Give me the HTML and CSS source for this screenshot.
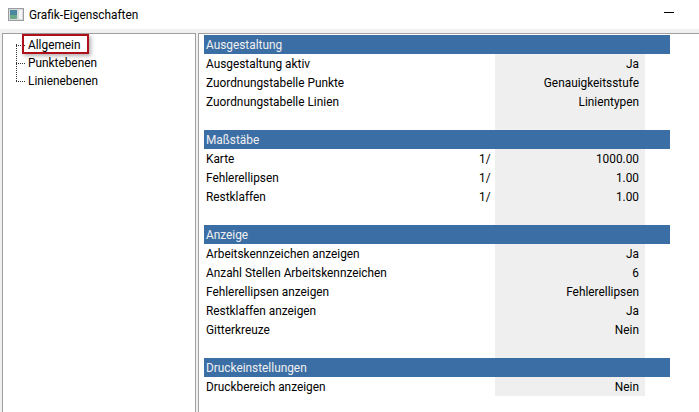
FILE: index.html
```html
<!DOCTYPE html>
<html>
    <head>
        <title>Grafik-Eigenschaften</title>
        <meta charset="utf8"/>
        <link rel="stylesheet" href="styles.css">
    </head>
    <body>
        <div class="titlebar">
            <svg class="appicon" width="16" height="14" viewBox="0 0 16 14">
                <rect x="0.5" y="0.5" width="15" height="12" fill="#d8dadc" stroke="#9a9ca0"/>
                <rect x="2" y="2" width="7" height="9" fill="#4a86a0"/>
                <rect x="2" y="7" width="7" height="4" fill="#6aa888"/>
                <rect x="11" y="2" width="3" height="9" fill="#f4f6f6"/>
            </svg>
            <span class="titletext">Grafik-Eigenschaften</span>
            <div class="minimize"></div>
        </div>
        <div class="main">
            <div class="tree">
                <div class="treeline"></div>
                <ul>
                    <li class="selected">Allgemein</li>
                    <li>Punktebenen</li>
                    <li>Linienebenen</li>
                </ul>
            </div>
            <div class="props">
                <div class="head">Ausgestaltung</div>
                <div class="row"><span>Ausgestaltung aktiv</span><i></i><b>Ja</b></div>
                <div class="row"><span>Zuordnungstabelle Punkte</span><i></i><b>Genauigkeitsstufe</b></div>
                <div class="row"><span>Zuordnungstabelle Linien</span><i></i><b>Linientypen</b></div>
                <div class="row"><span></span><i></i><b></b></div>
                <div class="head">Maßstäbe</div>
                <div class="row"><span>Karte</span><i>1/</i><b>1000.00</b></div>
                <div class="row"><span>Fehlerellipsen</span><i>1/</i><b>1.00</b></div>
                <div class="row"><span>Restklaffen</span><i>1/</i><b>1.00</b></div>
                <div class="row"><span></span><i></i><b></b></div>
                <div class="head">Anzeige</div>
                <div class="row"><span>Arbeitskennzeichen anzeigen</span><i></i><b>Ja</b></div>
                <div class="row"><span>Anzahl Stellen Arbeitskennzeichen</span><i></i><b>6</b></div>
                <div class="row"><span>Fehlerellipsen anzeigen</span><i></i><b>Fehlerellipsen</b></div>
                <div class="row"><span>Restklaffen anzeigen</span><i></i><b>Ja</b></div>
                <div class="row"><span>Gitterkreuze</span><i></i><b>Nein</b></div>
                <div class="row"><span></span><i></i><b></b></div>
                <div class="head">Druckeinstellungen</div>
                <div class="row"><span>Druckbereich anzeigen</span><i></i><b>Nein</b></div>
            </div>
        </div>
    </body>
</html>
```

FILE: styles.css
```css
*{
    box-sizing: border-box;
}
html,body{
    height: 100%;
}
body,ul,li{
    margin: 0px;
    padding: 0px;
    list-style: none;
}
body{
    display: flex;
    flex-direction: column;
    overflow: hidden;
    background-color: #f0f0f0;
    color: #000;
    font-family: Roboto, "Noto Sans", sans-serif;
    font-size: 11.85px;
}
.titlebar{
    height: 29px;
    display: flex;
    align-items: center;
    padding-left: 8px;
    background-color: #fff;
}
.appicon{
    margin-right: 5px;
}
.titletext{
    flex: 1;
}
.minimize{
    width: 10px;
    height: 1px;
    margin-right: 25px;
    margin-bottom: 4px;
    background-color: #000;
}
.main{
    flex: 1;
    display: flex;
    margin-top: 4px;
    padding-left: 2px;
    gap: 2px;
}
.tree{
    width: 194px;
    position: relative;
    padding: 3px 0px 0px 25px;
    background-color: #fff;
    border: 1px solid #a0a0a0;
    border-bottom: 0px;
}
.tree li{
    height: 18px;
    line-height: 17px;
    position: relative;
}
.tree li:before{
    content: "";
    position: absolute;
    left: -12px;
    top: 8px;
    width: 9px;
    border-top: 1px dotted #333;
}
.treeline{
    position: absolute;
    left: 13px;
    top: 10px;
    height: 37px;
    border-left: 1px dotted #333;
}
.tree li.selected:after{
    content: "";
    position: absolute;
    left: -6px;
    top: -3px;
    width: 63px;
    height: 16px;
    border: 2px solid #b0101c;
    box-shadow: 2px 2px 4px rgba(0,0,0,0.3);
}
.props{
    flex: 1;
    padding: 1px 29px 0px 5px;
    background-color: #fff;
    border-top: 1px solid #a0a0a0;
    border-left: 1px solid #a0a0a0;
}
.head{
    height: 19px;
    line-height: 21px;
    padding-left: 2px;
    background-color: #3b6ea5;
    color: #f0f0f0;
}
.row{
    height: 19px;
    line-height: 21px;
    display: flex;
}
.row span{
    width: 275px;
    padding-left: 2px;
}
.row i{
    width: 16px;
    font-style: normal;
}
.row b{
    width: 150px;
    padding-right: 6px;
    text-align: right;
    font-weight: normal;
    background-color: #efefef;
}
```
